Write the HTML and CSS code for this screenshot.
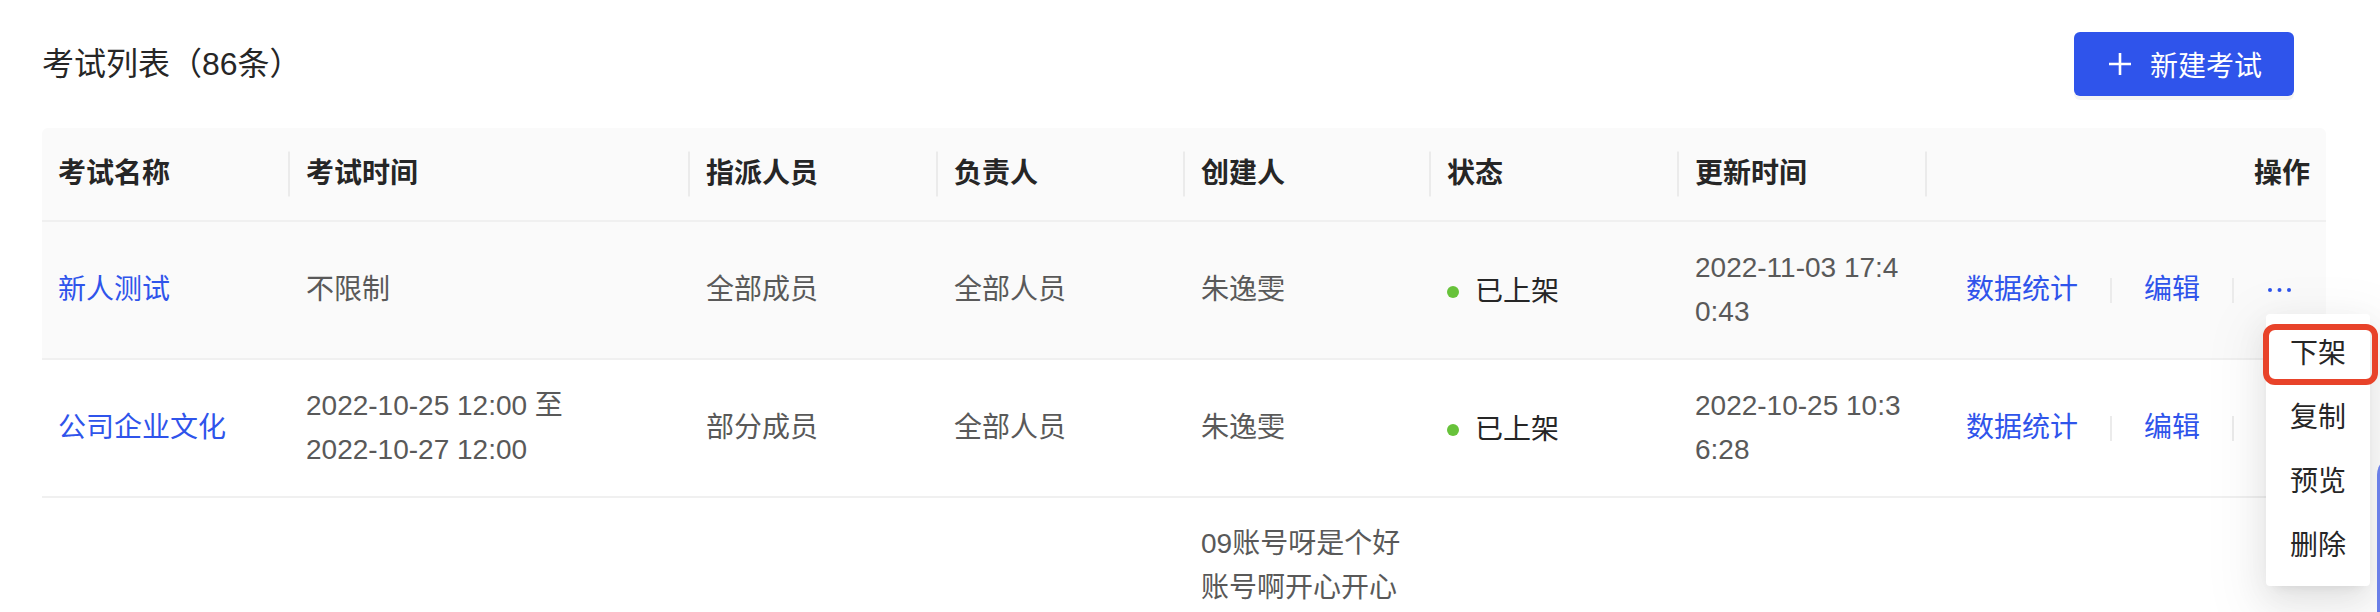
FILE: index.html
```html
<!DOCTYPE html>
<html lang="zh-CN">
<head>
    <meta charset="UTF-8">
    <meta name="viewport" content="width=device-width, initial-scale=1.0">
    <title>考试列表</title>
    <link rel="stylesheet" href="styles.css">
</head>
<body>
    <div class="page">
        <!-- 顶部：标题 + 新建按钮 -->
        <div class="page-head">
            <h2 class="page-title">考试列表（86条）</h2>
            <button class="btn-primary">
                <svg class="btn-icon" width="28" height="28" viewBox="0 0 28 28">
                    <path d="M14 3v22M3 14h22" stroke="#fff" stroke-width="2.6" fill="none"/>
                </svg>
                <span>新建考试</span>
            </button>
        </div>

        <!-- 考试表格 -->
        <table class="exam-table">
            <colgroup>
                <col style="width:248px">
                <col style="width:400px">
                <col style="width:248px">
                <col style="width:247px">
                <col style="width:246px">
                <col style="width:248px">
                <col style="width:248px">
                <col>
            </colgroup>
            <thead>
                <tr>
                    <th>考试名称</th>
                    <th>考试时间</th>
                    <th>指派人员</th>
                    <th>负责人</th>
                    <th>创建人</th>
                    <th>状态</th>
                    <th>更新时间</th>
                    <th class="col-op">操作</th>
                </tr>
            </thead>
            <tbody>
                <tr class="is-hover">
                    <td><a class="link" href="#">新人测试</a></td>
                    <td>不限制</td>
                    <td>全部成员</td>
                    <td>全部人员</td>
                    <td>朱逸雯</td>
                    <td><span class="status"><i class="dot"></i>已上架</span></td>
                    <td class="break">2022-11-03 17:40:43</td>
                    <td class="col-op">
                        <div class="actions">
                            <a class="link" href="#">数据统计</a>
                            <span class="divider"></span>
                            <a class="link" href="#">编辑</a>
                            <span class="divider"></span>
                            <a class="more" href="#">
                                <svg width="44" height="28" viewBox="0 0 44 28">
                                    <circle cx="4" cy="14" r="2" fill="#2f54eb"/>
                                    <circle cx="13.5" cy="14" r="2" fill="#2f54eb"/>
                                    <circle cx="23" cy="14" r="2" fill="#2f54eb"/>
                                </svg>
                            </a>
                        </div>
                    </td>
                </tr>
                <tr>
                    <td><a class="link" href="#">公司企业文化</a></td>
                    <td>2022-10-25 12:00 至<br>2022-10-27 12:00</td>
                    <td>部分成员</td>
                    <td>全部人员</td>
                    <td>朱逸雯</td>
                    <td><span class="status"><i class="dot"></i>已上架</span></td>
                    <td class="break">2022-10-25 10:36:28</td>
                    <td class="col-op">
                        <div class="actions">
                            <a class="link" href="#">数据统计</a>
                            <span class="divider"></span>
                            <a class="link" href="#">编辑</a>
                            <span class="divider"></span>
                            <a class="more" href="#">
                                <svg width="44" height="28" viewBox="0 0 44 28">
                                    <circle cx="4" cy="14" r="2" fill="#2f54eb"/>
                                    <circle cx="13.5" cy="14" r="2" fill="#2f54eb"/>
                                    <circle cx="23" cy="14" r="2" fill="#2f54eb"/>
                                </svg>
                            </a>
                        </div>
                    </td>
                </tr>
                <tr>
                    <td></td>
                    <td></td>
                    <td></td>
                    <td></td>
                    <td>09账号呀是个好账号啊开心开心</td>
                    <td></td>
                    <td></td>
                    <td></td>
                </tr>
            </tbody>
        </table>

        <!-- 更多操作下拉 -->
        <ul class="dropdown">
            <li>下架</li>
            <li>复制</li>
            <li>预览</li>
            <li>删除</li>
        </ul>
        <div class="mark"></div>
        <div class="float-tab"></div>
    </div>
</body>
</html>
```

FILE: styles.css
```css
body {
    margin: 0;
    font-family: "Liberation Sans", "Noto Sans CJK SC", sans-serif;
    color: #262626;
    background-color: #fff;
    overflow: hidden;
}

.page {
    position: relative;
    padding: 32px 54px 0 42px;
}

.page-head {
    display: flex;
    justify-content: space-between;
    align-items: center;
    margin-right: 32px;
    margin-bottom: 32px;
}

.page-title {
    margin: 0;
    font-size: 32px;
    font-weight: 400;
    line-height: 44px;
    color: #262626;
}

.btn-primary {
    display: inline-flex;
    align-items: center;
    gap: 16px;
    height: 64px;
    padding: 0 32px;
    border: none;
    border-radius: 6px;
    background-color: #2f54eb;
    color: #fff;
    font-family: inherit;
    font-size: 28px;
    box-shadow: 0 4px 0 rgba(0, 0, 0, 0.045);
    cursor: pointer;
}

.btn-icon {
    display: block;
}

.exam-table {
    width: 100%;
    table-layout: fixed;
    border-collapse: separate;
    border-spacing: 0;
    font-size: 28px;
    line-height: 44px;
}

.exam-table th,
.exam-table td {
    padding: 24px 16px;
    text-align: left;
    border-bottom: 2px solid #f0f0f0;
}

.exam-table th {
    position: relative;
    background-color: #fafafa;
    font-weight: 700;
    color: #262626;
}

.exam-table th:first-child {
    border-top-left-radius: 6px;
}

.exam-table th:last-child {
    border-top-right-radius: 6px;
}

.exam-table th:not(:last-child)::after {
    content: "";
    position: absolute;
    right: 0;
    top: 50%;
    width: 2px;
    height: 45px;
    transform: translateY(-50%);
    background-color: #ebebeb;
}

.exam-table td {
    color: #595959;
    vertical-align: middle;
}

.exam-table tr.is-hover td {
    background-color: #fafafa;
}

.exam-table .col-op {
    text-align: right;
}

.exam-table .break {
    word-break: break-all;
}

.link {
    color: #2f54eb;
    text-decoration: none;
}

.status {
    display: inline-flex;
    align-items: center;
    gap: 16px;
    color: #262626;
}

.dot {
    width: 12px;
    height: 12px;
    border-radius: 50%;
    background-color: #67c23a;
}

.actions {
    display: flex;
    justify-content: flex-end;
    align-items: center;
}

.divider {
    width: 2px;
    height: 25px;
    margin: 0 32px;
    background-color: #ebebeb;
}

.more {
    display: block;
    height: 28px;
}

.more svg {
    display: block;
}

.dropdown {
    position: absolute;
    top: 314px;
    right: 10px;
    width: 104px;
    margin: 0;
    padding: 8px 0;
    list-style: none;
    background-color: #fff;
    border-radius: 4px;
    box-shadow: 0 6px 12px -8px rgba(0, 0, 0, 0.12), 0 12px 32px 0 rgba(0, 0, 0, 0.08), 0 18px 56px 16px rgba(0, 0, 0, 0.05);
}

.dropdown li {
    height: 64px;
    line-height: 64px;
    text-align: center;
    font-size: 28px;
    color: #262626;
}

.mark {
    position: absolute;
    top: 324px;
    left: 2263px;
    width: 115px;
    height: 61px;
    box-sizing: border-box;
    border: 6px solid #e8432a;
    border-radius: 12px;
}

.float-tab {
    position: absolute;
    top: 455px;
    left: 2377px;
    width: 40px;
    height: 240px;
    border-radius: 20px 0 0 0;
    background-color: #6a7fe8;
}
```
